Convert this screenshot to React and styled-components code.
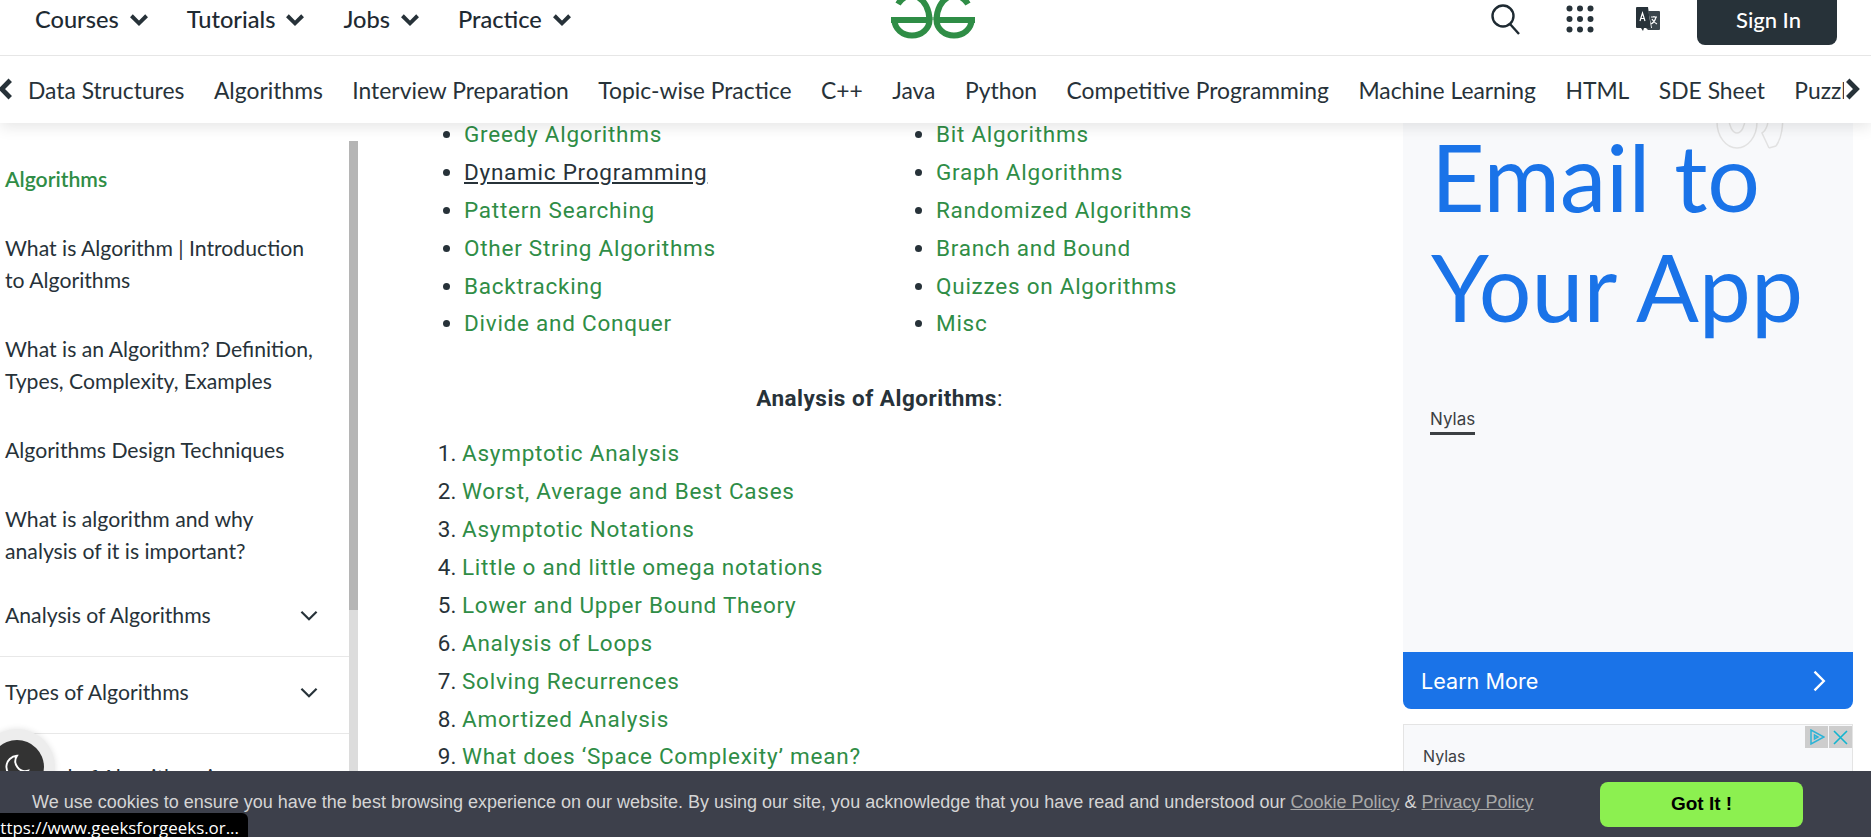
import { createGlobalStyle } from 'styled-components'
import styled from 'styled-components'

const GREEN = '#2f8d46'
const INK = '#273239'

const Global = createGlobalStyle`
    html, body { margin: 0; padding: 0; background: #fff; }
    body { width: 1871px; height: 837px; overflow: hidden; font-family: "Lato", "Liberation Sans", sans-serif; color: ${INK}; }
    * { box-sizing: border-box; }
    a { text-decoration: none; color: inherit; }
`

const Page = styled.div`
    position: relative;
    width: 1871px;
    height: 837px;
    overflow: hidden;
`

const Header = styled.header`
    position: relative;
    z-index: 5;
    background: #fff;
    box-shadow: 0 4px 14px rgba(0, 0, 0, .1);
`

const TopBar = styled.div`
    height: 56px;
    padding: 0 34px 0 35px;
    border-bottom: 1px solid #e6e6e6;
    display: grid;
    grid-template-columns: 1fr auto 1fr;
`

const TopMenu = styled.nav`
    display: flex;
    gap: 35px;
    height: 38px;
    align-items: center;
`

const TopItem = styled.a`
    display: flex;
    align-items: center;
    gap: 7px;
    font-size: 23.6px;
    font-weight: 500;
    color: #1e2a32;
`

const Logo = styled.svg`
    width: 84px;
    height: 39px;
    display: block;
    margin-left: -7px;
`

const TopTools = styled.div`
    display: flex;
    justify-content: flex-end;
    align-items: flex-start;
`

const ToolIcon = styled.span`
    width: ${p => p.$w}px;
    height: 38px;
    margin-right: ${p => p.$gap}px;
    display: flex;
    align-items: center;
    justify-content: center;
`

const SignIn = styled.a`
    width: 140px;
    height: 45px;
    padding: 0 0 7px 3px;
    background: ${INK};
    color: #fff;
    border-radius: 0 0 8px 8px;
    font-size: 22px;
    font-weight: 500;
    display: flex;
    align-items: center;
    justify-content: center;
`

const SubBar = styled.nav`
    position: relative;
    height: 67px;
    padding-left: 28px;
    display: flex;
    align-items: center;
    gap: 29.5px;
    overflow: hidden;
    white-space: nowrap;
`

const SubItem = styled.a`
    font-size: 22.85px;
    color: ${INK};
    flex: none;
`

const Arrow = styled.span`
    position: absolute;
    top: 0;
    bottom: 0;
    ${p => p.$side}: 0;
    width: ${p => p.$w}px;
    padding-bottom: 1px;
    background: #fff;
    display: flex;
    align-items: center;
    justify-content: flex-start;
    svg { margin-left: ${p => p.$inset}px; }
`

const Main = styled.main`
    display: flex;
    margin-top: -7px;
`

const Sidebar = styled.aside`
    position: relative;
    flex: none;
    width: 358px;
    height: 730px;
    padding: 47px 9px 0 0;
`

const Track = styled.div`
    position: absolute;
    top: 25px;
    right: 0;
    width: 9px;
    bottom: 0;
    background: #dcdcdc;
`

const Thumb = styled.div`
    height: 469px;
    background: #b5b5b5;
`

const SideLink = styled.a`
    display: block;
    font-size: 21.2px;
    line-height: 32px;
    padding: 0 30px 0 5px;
    margin-bottom: ${p => p.$mb ?? 37}px;
    color: ${p => (p.$active ? GREEN : INK)};
    font-weight: ${p => (p.$active ? 600 : 400)};
`

const SideGroup = styled.div`
    height: 77px;
    padding: ${p => (p.$low ? '10px 27px 0 5px' : '0 27px 6px 5px')};
    border-bottom: 1px solid #e8e8e8;
    display: flex;
    align-items: center;
    justify-content: space-between;
    font-size: 21.2px;
    margin-top: ${p => p.$mt ?? 0}px;
    white-space: nowrap;
`

const Article = styled.div`
    flex: none;
    width: 1045px;
    margin-top: -1px;
    padding-left: 74px;
    font-family: "Roboto", "Liberation Sans", sans-serif;
    font-size: 22.5px;
    line-height: 38px;
`

const Columns = styled.div`
    display: grid;
    grid-template-columns: 472px 1fr;
`

const BulletList = styled.ul`
    margin: 0;
    padding-left: 32px;
    li::marker { color: ${INK}; }
`

const Item = styled.li`
    height: 37.9px;
`

const Link = styled.a`
    color: ${p => (p.$hover ? INK : GREEN)};
    letter-spacing: .75px;
    text-decoration: ${p => (p.$hover ? 'underline' : 'none')};
`

const Heading = styled.p`
    margin: 37px 0 17px;
    text-align: center;
    width: 895px;
    color: ${INK};
    letter-spacing: .5px;
    span { font-weight: 700; }
`

const NumberList = styled.ol`
    margin: 0;
    padding-left: 30px;
`

const AdColumn = styled.div`
    flex: none;
    width: 450px;
    font-family: "Inter", "Liberation Sans", sans-serif;
`

const AdCard = styled.div`
    position: relative;
    height: 536px;
    background: #f8f9fb;
    padding: 5px 0 0 28px;
`

const AdTitle = styled.h2`
    margin: 0;
    font-family: "Lato", sans-serif;
    font-weight: 400;
    font-size: 93px;
    line-height: 110px;
    color: #1a73e8;
`

const AdBrand = styled.span`
    display: inline-block;
    margin: 65px 0 0 -1px;
    font-size: 17px;
    line-height: 26px;
    border-bottom: 3px solid #3c4043;
    color: #3c4043;
`

const Watermark = styled.svg`
    position: absolute;
    top: -6px;
    right: 67px;
`

const LearnMore = styled.a`
    height: 57px;
    padding: 0 21px 0 18px;
    background: #1a73e8;
    color: #fff;
    border-radius: 0 0 8px 8px;
    font-size: 21.6px;
    display: flex;
    align-items: center;
    justify-content: space-between;
`

const SmallAd = styled.div`
    position: relative;
    margin-top: 15px;
    height: 60px;
    background: #f8f9fb;
    border: 1px solid #e4e4e4;
    padding: 19px 0 0 19px;
    font-size: 16px;
    line-height: 24px;
    color: #3c4043;
`

const AdMarks = styled.div`
    position: absolute;
    top: 1px;
    right: 0;
    display: flex;
    gap: 1px;
`

const AdMark = styled.span`
    width: 23px;
    height: 22px;
    background: #cdcdcd;
    display: flex;
    align-items: center;
    justify-content: center;
`

const CookieBar = styled.div`
    position: absolute;
    z-index: 7;
    left: 0;
    right: 0;
    bottom: 0;
    height: 66px;
    background: #3d404b;
    padding: 0 68px 0 32px;
    display: flex;
    align-items: center;
    justify-content: space-between;
    font-family: "Liberation Sans", Arial, sans-serif;
    font-size: 18px;
    color: #d5d5d5;
`

const CookieText = styled.p`
    margin: 0 0 4px;
    a { color: #a9a9a9; text-decoration: underline; }
`

const GotIt = styled.button`
    width: 203px;
    height: 45px;
    border: 0;
    border-radius: 8px;
    background: #8cf050;
    color: #000;
    font-family: inherit;
    font-weight: 700;
    font-size: 19px;
`

const StatusTip = styled.div`
    position: absolute;
    z-index: 8;
    left: 0;
    bottom: 0;
    width: 248px;
    height: 24px;
    background: #000;
    border-radius: 0 6px 0 0;
    overflow: hidden;
    color: #fff;
    font-family: "Open Sans", sans-serif;
    font-size: 16.9px;
    line-height: 29px;
    white-space: nowrap;
    text-indent: -10px;
`

const MoonHalo = styled.div`
    position: absolute;
    z-index: 6;
    left: -21px;
    top: 729px;
    width: 76px;
    height: 76px;
    border-radius: 50%;
    background: #ededed;
    box-shadow: 0 0 6px rgba(0, 0, 0, .12);
    display: flex;
    align-items: center;
    justify-content: center;
`

const MoonDisc = styled.div`
    width: 54px;
    height: 54px;
    border-radius: 50%;
    background: #333;
    display: flex;
    align-items: center;
    justify-content: center;
`

const Chevron = ({ size = 24, weight = 2, color = INK, dir = 'down' }) => {
    const d = { down: 'M5 9l7 7 7-7', left: 'M15 4l-8 8 8 8', right: 'M9 4l8 8-8 8' }[dir]
    return (
        <svg width={size} height={size} viewBox="0 0 24 24" fill="none" stroke={color} strokeWidth={weight} style={{ flex: 'none' }}>
            <path d={d} />
        </svg>
    )
}

const topMenu = ['Courses', 'Tutorials', 'Jobs', 'Practice']
const subMenu = ['Data Structures', 'Algorithms', 'Interview Preparation', 'Topic-wise Practice', 'C++', 'Java', 'Python', 'Competitive Programming', 'Machine Learning', 'HTML', 'SDE Sheet', 'Puzzles']
const leftTopics = ['Greedy Algorithms', 'Dynamic Programming', 'Pattern Searching', 'Other String Algorithms', 'Backtracking', 'Divide and Conquer']
const rightTopics = ['Bit Algorithms', 'Graph Algorithms', 'Randomized Algorithms', 'Branch and Bound', 'Quizzes on Algorithms', 'Misc']
const analysis = ['Asymptotic Analysis', 'Worst, Average and Best Cases', 'Asymptotic Notations', 'Little o and little omega notations', 'Lower and Upper Bound Theory', 'Analysis of Loops', 'Solving Recurrences', 'Amortized Analysis', 'What does ‘Space Complexity’ mean?']

export default function App() {
    return (
        <Page>
            <Global />
            <Header>
                <TopBar>
                    <TopMenu>
                        {topMenu.map(t => (
                            <TopItem key={t} href="#">{t}<Chevron size={26} weight={3.6} /></TopItem>
                        ))}
                    </TopMenu>
                    <Logo viewBox="0 0 84 39" fill="none" stroke={GREEN} strokeWidth="6">
                        <path d="M0 20H38.500A17.500 15.500 0 0 1 3.500 20" />
                        <path d="M38.500 20A18 25 0 0 0 7 4" />
                        <path d="M84 20H45.500A17.500 15.500 0 0 0 80.500 20" />
                        <path d="M45.500 20A18 25 0 0 1 77 4" />
                    </Logo>
                    <TopTools>
                        <ToolIcon $w={32} $gap={43}>
                            <svg width="32" height="32" viewBox="0 0 32 32" fill="none" stroke="#1e2a32" strokeWidth="2.4">
                                <circle cx="13" cy="13" r="10.500" /><path d="M20 21l9 10" />
                            </svg>
                        </ToolIcon>
                        <ToolIcon $w={30} $gap={40}>
                            <svg width="28" height="28" viewBox="0 0 28 28" fill={INK}>
                                {[3.5, 14, 24.5].flatMap(y => [3.5, 14, 24.5].map(x => <circle key={`${x}-${y}`} cx={x} cy={y} r="3" />))}
                            </svg>
                        </ToolIcon>
                        <ToolIcon $w={26} $gap={36}>
                            <svg width="26" height="26" viewBox="0 0 26 26">
                                <path d="M2 1h11l3 21h-7l-1 3-2-3H2a1 1 0 0 1-1-1V2a1 1 0 0 1 1-1z" fill={INK} />
                                <path d="M13 5h11a1 1 0 0 1 1 1v17a1 1 0 0 1-1 1H13l-2-2h6z" fill="#3c464d" />
                                <path d="M5 15l2.500-8L10 15M6 12.500h3" fill="none" stroke="#fff" strokeWidth="1.200" />
                                <path d="M16 11h6M19 10v1M21 11c-1 4-3 6-5 7M17 13c1 2 3 4 5 5" fill="none" stroke="#fff" strokeWidth="1.200" />
                            </svg>
                        </ToolIcon>
                        <SignIn href="#">Sign In</SignIn>
                    </TopTools>
                </TopBar>
                <SubBar>
                    {subMenu.map(t => <SubItem key={t} href="#">{t}</SubItem>)}
                    <Arrow $side="left" $w={14} $inset={-6}><Chevron size={26} weight={4.5} dir="left" /></Arrow>
                    <Arrow $side="right" $w={27} $inset={-6}><Chevron size={26} weight={4.5} dir="right" /></Arrow>
                </SubBar>
            </Header>
            <Main>
                <Sidebar>
                    <Track><Thumb /></Track>
                    <SideLink href="#" $active>Algorithms</SideLink>
                    <SideLink href="#">What is Algorithm | Introduction to Algorithms</SideLink>
                    <SideLink href="#">What is an Algorithm? Definition, Types, Complexity, Examples</SideLink>
                    <SideLink href="#">Algorithms Design Techniques</SideLink>
                    <SideLink href="#" $mb={0}>What is algorithm and why analysis of it is important?</SideLink>
                    <SideGroup $mt={13}>Analysis of Algorithms<Chevron size={26} /></SideGroup>
                    <SideGroup>Types of Algorithms<Chevron size={26} /></SideGroup>
                    <SideGroup $low>Central of Algorithms in</SideGroup>
                </Sidebar>
                <Article>
                    <Columns>
                        <BulletList>
                            {leftTopics.map(t => (
                                <Item key={t}><Link href="#" $hover={t === 'Dynamic Programming'}>{t}</Link></Item>
                            ))}
                        </BulletList>
                        <BulletList>
                            {rightTopics.map(t => <Item key={t}><Link href="#">{t}</Link></Item>)}
                        </BulletList>
                    </Columns>
                    <Heading><span>Analysis of Algorithms</span>:</Heading>
                    <NumberList>
                        {analysis.map(t => <Item key={t}><Link href="#">{t}</Link></Item>)}
                    </NumberList>
                </Article>
                <AdColumn>
                    <AdCard>
                        <Watermark width="70" height="40" viewBox="0 0 70 40" fill="none" stroke="#e2e2e2" strokeWidth="1.500">
                            <ellipse cx="21" cy="12" rx="20" ry="26" />
                            <ellipse cx="21" cy="8" rx="8" ry="15" />
                            <path d="M53 38l-7-15c5-3 7-10 7-23M60 36c6-8 7-20 7-36" />
                            <path d="M53 38l7-2" />
                        </Watermark>
                        <AdTitle>Email to Your App</AdTitle>
                        <AdBrand>Nylas</AdBrand>
                    </AdCard>
                    <LearnMore href="#">Learn More<Chevron size={28} weight={2} color="#fff" dir="right" /></LearnMore>
                    <SmallAd>
                        Nylas
                        <AdMarks>
                            <AdMark>
                                <svg width="16" height="16" viewBox="0 0 16 16" fill="none" stroke="#2bb3d6" strokeWidth="1.500">
                                    <path d="M2 1v14l13-7zM5.500 6v4l3.500-2z" />
                                </svg>
                            </AdMark>
                            <AdMark>
                                <svg width="15" height="15" viewBox="0 0 15 15" fill="none" stroke="#13b5cf" strokeWidth="1.600">
                                    <path d="M1 1l13 13M14 1L1 14" />
                                </svg>
                            </AdMark>
                        </AdMarks>
                    </SmallAd>
                </AdColumn>
            </Main>
            <MoonHalo>
                <MoonDisc>
                    <svg width="30" height="30" viewBox="0 0 24 24" fill="none" stroke="#fff" strokeWidth="1.500">
                        <path d="M12 3a9 9 0 1 0 9 12 8 8 0 0 1-9-12z" />
                    </svg>
                </MoonDisc>
            </MoonHalo>
            <CookieBar>
                <CookieText>
                    We use cookies to ensure you have the best browsing experience on our website. By using our site, you acknowledge that you have read and understood our <a href="#">Cookie Policy</a> &amp; <a href="#">Privacy Policy</a>
                </CookieText>
                <GotIt>Got It !</GotIt>
            </CookieBar>
            <StatusTip>https://www.geeksforgeeks.or...</StatusTip>
        </Page>
    )
}
